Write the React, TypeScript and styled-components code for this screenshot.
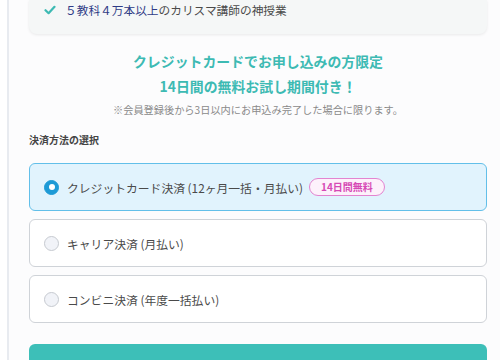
import React, { useState } from 'react';
import styled, { createGlobalStyle } from 'styled-components';

const GlobalStyle = createGlobalStyle`
  body {
    margin: 0;
    background: #ffffff;
    font-family: "Noto Sans CJK JP", "Noto Sans", sans-serif;
    color: #444;
  }
`;

const Page = styled.div`
  margin-left: 7px;
  border-left: 2px solid #e8ebf0;
  background: #fcfcfd;
  padding: 0 13px 0 20px;
  overflow: hidden;
  height: 360px;
  box-sizing: border-box;
`;

const FeatureCard = styled.div`
  background: #f5f7f7;
  border-radius: 0 0 8px 8px;
  box-shadow: 0 1px 3px rgba(0, 0, 0, 0.08);
  padding: 0 16px 14px 15px;
`;

const FeatureItem = styled.div`
  display: flex;
  align-items: center;
  gap: 9px;
  font-size: 11.7px;
  line-height: 20px;
  color: #4a4a4a;
`;

const Accent = styled.span`
  color: #2f3b86;
`;

const Promo = styled.div`
  text-align: center;
  margin-top: 15px;
`;

const PromoTitle = styled.div`
  color: #3dbab3;
  font-weight: 700;
  font-size: 13.9px;
  line-height: 25px;
`;

const PromoNote = styled.div`
  color: #8a8a8a;
  font-size: 10.2px;
  line-height: 16px;
  margin-top: 3px;
`;

const SectionLabel = styled.div`
  font-size: 10px;
  font-weight: 700;
  color: #444;
  margin-top: 14px;
  line-height: 16px;
`;

const Options = styled.div`
  display: flex;
  flex-direction: column;
  gap: 8px;
  margin-top: 15px;
`;

const Option = styled.label<{ $active: boolean }>`
  display: flex;
  align-items: center;
  gap: 8px;
  height: 48px;
  box-sizing: border-box;
  padding: 0 14px;
  border-radius: 6px;
  border: 1px solid ${p => (p.$active ? '#62bfe9' : '#cfd3d8')};
  background: ${p => (p.$active ? '#e1f3fd' : '#ffffff')};
  cursor: pointer;
`;

const Radio = styled.span<{ $active: boolean }>`
  width: 15px;
  height: 15px;
  border-radius: 50%;
  box-sizing: border-box;
  flex-shrink: 0;
  display: flex;
  align-items: center;
  justify-content: center;
  background: ${p => (p.$active ? '#1d9ad6' : '#f1f3f8')};
  border: 1px solid ${p => (p.$active ? '#1d9ad6' : '#c6cad0')};

  &::after {
    content: '';
    width: 6px;
    height: 6px;
    border-radius: 50%;
    background: #ffffff;
    display: ${p => (p.$active ? 'block' : 'none')};
  }
`;

const OptionText = styled.span`
  font-size: 11.8px;
  color: #4a4a4a;
`;

const Badge = styled.span`
  font-size: 10px;
  font-weight: 700;
  color: #d64ab5;
  background: #fdf1fb;
  border: 1px solid #e384d0;
  border-radius: 9px;
  padding: 0 11px;
  line-height: 16px;
  margin-left: -2px;
`;

const SubmitButton = styled.button`
  margin-top: 21px;
  width: 100%;
  height: 48px;
  border: none;
  border-radius: 6px;
  background: #3dbfb8;
  color: #ffffff;
  font-family: inherit;
  font-size: 13.5px;
  font-weight: 700;
`;

const Check = () => (
  <svg width="12" height="10" viewBox="0 0 12 10">
    <path d="M1.5 5.2 L4.6 8.2 L10.5 1.8" fill="none" stroke="#3dbab3" strokeWidth="2.2" strokeLinecap="round" strokeLinejoin="round" />
  </svg>
);

const methods = [
  { id: 'credit', label: 'クレジットカード決済 (12ヶ月一括・月払い)', badge: '14日間無料' },
  { id: 'carrier', label: 'キャリア決済 (月払い)' },
  { id: 'conveni', label: 'コンビニ決済 (年度一括払い)' },
];

export default function App() {
  const [selected, setSelected] = useState('credit');

  return (
    <>
      <GlobalStyle />
      <Page>
        <FeatureCard>
          <FeatureItem>
            <Check />
            <span>
              <Accent>５教科４万本以上</Accent>のカリスマ講師の神授業
            </span>
          </FeatureItem>
        </FeatureCard>

        <Promo>
          <PromoTitle>クレジットカードでお申し込みの方限定</PromoTitle>
          <PromoTitle>14日間の無料お試し期間付き！</PromoTitle>
          <PromoNote>※会員登録後から3日以内にお申込み完了した場合に限ります。</PromoNote>
        </Promo>

        <SectionLabel>決済方法の選択</SectionLabel>

        <Options>
          {methods.map(m => (
            <Option key={m.id} $active={selected === m.id} onClick={() => setSelected(m.id)}>
              <Radio $active={selected === m.id} />
              <OptionText>{m.label}</OptionText>
              {m.badge && <Badge>{m.badge}</Badge>}
            </Option>
          ))}
        </Options>

        <SubmitButton>この内容で申し込む</SubmitButton>
      </Page>
    </>
  );
}
